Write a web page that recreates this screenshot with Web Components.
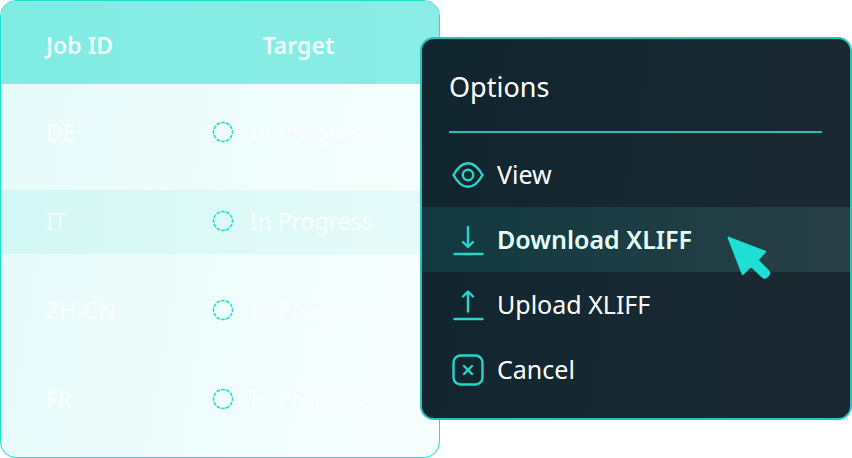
<!DOCTYPE html>
<html lang="en">
<head>
<meta charset="utf-8">
<meta name="viewport" content="width=device-width, initial-scale=1">
<title>Job options</title>
<style>
  body {
    margin: 0;
    background: #fff;
    font-family: 'Noto Sans', sans-serif;
  }
</style>
</head>
<body>
<job-board>
  <job-table slot="table"></job-table>
  <options-menu slot="menu" heading="Options">
    <menu-item icon="view">View</menu-item>
    <menu-item icon="download" active>Download XLIFF</menu-item>
    <menu-item icon="upload">Upload XLIFF</menu-item>
    <menu-item icon="cancel">Cancel</menu-item>
  </options-menu>
</job-board>

<script>
class JobBoard extends HTMLElement {
  connectedCallback() {
    this.attachShadow({ mode: 'open' });
    this.shadowRoot.innerHTML = `
      <style>
        /* the two cards share the narrow middle column */
        :host {
          display: grid;
          grid-template-columns: 420fr 20fr 412fr;
          min-height: 100vh;
        }
        slot[name="table"]::slotted(*) {
          grid-column: 1 / 3;
          grid-row: 1;
        }
        slot[name="menu"]::slotted(*) {
          grid-column: 2 / 4;
          grid-row: 1;
          align-self: start;
          margin-top: 37px;
        }
      </style>
      <slot name="table"></slot>
      <slot name="menu"></slot>
    `;
  }
}

class JobTable extends HTMLElement {
  connectedCallback() {
    const jobs = [
      { id: 'DE', status: 'In Progress' },
      { id: 'IT', status: 'In Progress', selected: true },
      { id: 'ZH-CN', status: 'In Progress' },
      { id: 'FR', status: 'In Progress' }
    ];

    this.attachShadow({ mode: 'open' });
    this.shadowRoot.innerHTML = `
      <style>
        :host {
          display: block;
          box-sizing: border-box;
          overflow: hidden;
          border: 1px solid #1edfd0;
          border-radius: 16px;
          background: linear-gradient(100deg, #e6fbfa, #f0fdfc 60%, #f8fffe);
          color: rgba(255, 255, 255, 0.75);
          font-size: 23px;
          line-height: 32px;
        }
        table, thead {
          display: block;
        }
        tbody {
          display: grid;
          gap: 25px;
          padding: 17px 0;
        }
        tr {
          display: grid;
          grid-template-columns: 48% 1fr;
          align-items: center;
          box-sizing: border-box;
          height: 64px;
          padding: 0 0 2px 45px;
        }
        thead tr {
          height: 83px;
          padding-bottom: 0;
          padding-top: 4px;
          background: linear-gradient(90deg, #80ece3, #8aece5);
        }
        tr.selected {
          background: linear-gradient(90deg, #d2f7f4, #e7fbf9);
        }
        th, td {
          padding: 0;
          text-align: left;
          font-weight: 400;
        }
        th {
          font-weight: 600;
          color: #effefc;
        }
        th:last-child {
          padding-left: 28px;
        }
        .status {
          display: flex;
          align-items: center;
          gap: 16px;
          margin-left: -23px;
        }
        svg {
          flex: none;
          width: 22px;
          height: 22px;
        }
      </style>
      <table>
        <thead>
          <tr><th scope="col">Job ID</th><th scope="col">Target</th></tr>
        </thead>
        <tbody>
          ${jobs.map(job => `
            <tr class="${job.selected ? 'selected' : ''}">
              <td>${job.id}</td>
              <td>
                <div class="status">
                  <svg viewBox="0 0 22 22" aria-hidden="true">
                    <circle cx="11" cy="11" r="9.5" fill="none" stroke="#22dccf" stroke-width="1.5"
                      pathLength="96" stroke-dasharray="6 2" stroke-dashoffset="3"/>
                  </svg>
                  <span>${job.status}</span>
                </div>
              </td>
            </tr>
          `).join('')}
        </tbody>
      </table>
    `;
  }
}

class OptionsMenu extends HTMLElement {
  connectedCallback() {
    this.attachShadow({ mode: 'open' });
    this.shadowRoot.innerHTML = `
      <style>
        :host {
          display: block;
          position: relative;
          box-sizing: border-box;
          overflow: hidden;
          padding-bottom: 16px;
          border: 2px solid #27c3bb;
          border-radius: 14px;
          background: linear-gradient(100deg, #11252f, #162831 50%, #1c2831);
          color: #fff;
        }
        h2 {
          margin: 0 28px 9px 27px;
          padding: 28px 0 25px;
          border-bottom: 2px solid #2bbdb5;
          font-size: 27px;
          line-height: 39px;
          font-weight: 400;
        }
        /* mouse pointer lying over the active item */
        .pointer {
          position: absolute;
          left: 71%;
          top: 196px;
          width: 48px;
          height: 48px;
          pointer-events: none;
        }
      </style>
      <h2>${this.getAttribute('heading')}</h2>
      <slot></slot>
      <svg class="pointer" viewBox="0 0 46 46" aria-hidden="true">
        <path d="M2.500 2.500 37.500 16 30 24 40.500 34.500a3 3 0 0 1 0 4l-1.500 1.500a3 3 0 0 1-4 0L24 29.500 16 37.500Z"
          fill="#1edfd3" stroke="#1edfd3" stroke-width="2" stroke-linejoin="round"/>
      </svg>
    `;
  }
}

const icons = {
  view: `
    <path d="M1.500 16C5 9.500 10 4.200 16 4.200S27 9.500 30.500 16C27 22.500 22 27.800 16 27.800S5 22.500 1.500 16Z"/>
    <circle cx="16" cy="16" r="5.200"/>`,
  download: `
    <path d="M16 3V22.500M11 18l5 5 5-5"/>
    <path d="M2.500 30H30.500"/>`,
  upload: `
    <path d="M16 22.500V3M11 7.500l5-5 5 5"/>
    <path d="M2.500 30H30.500"/>`,
  cancel: `
    <rect x="1.500" y="1.500" width="29" height="29" rx="7"/>
    <path d="M12 12l8 8M20 12l-8 8"/>`
};

class MenuItem extends HTMLElement {
  connectedCallback() {
    this.attachShadow({ mode: 'open' });
    this.shadowRoot.innerHTML = `
      <style>
        :host {
          display: block;
        }
        button {
          display: flex;
          align-items: center;
          gap: 13px;
          box-sizing: border-box;
          width: 100%;
          height: 65px;
          padding: 0 30px;
          border: 0;
          background: none;
          color: inherit;
          font: inherit;
          font-size: 25px;
          line-height: 34px;
          text-align: left;
          cursor: pointer;
        }
        :host([active]) button {
          background: linear-gradient(90deg, #11393f, #1c3d43 50%, #283f45);
          color: #e4fffc;
          font-weight: 600;
        }
        svg {
          flex: none;
          width: 32px;
          height: 32px;
          fill: none;
          stroke: #2bd4cb;
          stroke-width: 2.4;
          stroke-linecap: round;
          stroke-linejoin: round;
        }
        span {
          padding-bottom: 2px;
        }
      </style>
      <button type="button">
        <svg viewBox="0 0 32 32" aria-hidden="true">${icons[this.getAttribute('icon')]}</svg>
        <span><slot></slot></span>
      </button>
    `;
  }
}

customElements.define('job-board', JobBoard);
customElements.define('job-table', JobTable);
customElements.define('options-menu', OptionsMenu);
customElements.define('menu-item', MenuItem);
</script>
</body>
</html>
